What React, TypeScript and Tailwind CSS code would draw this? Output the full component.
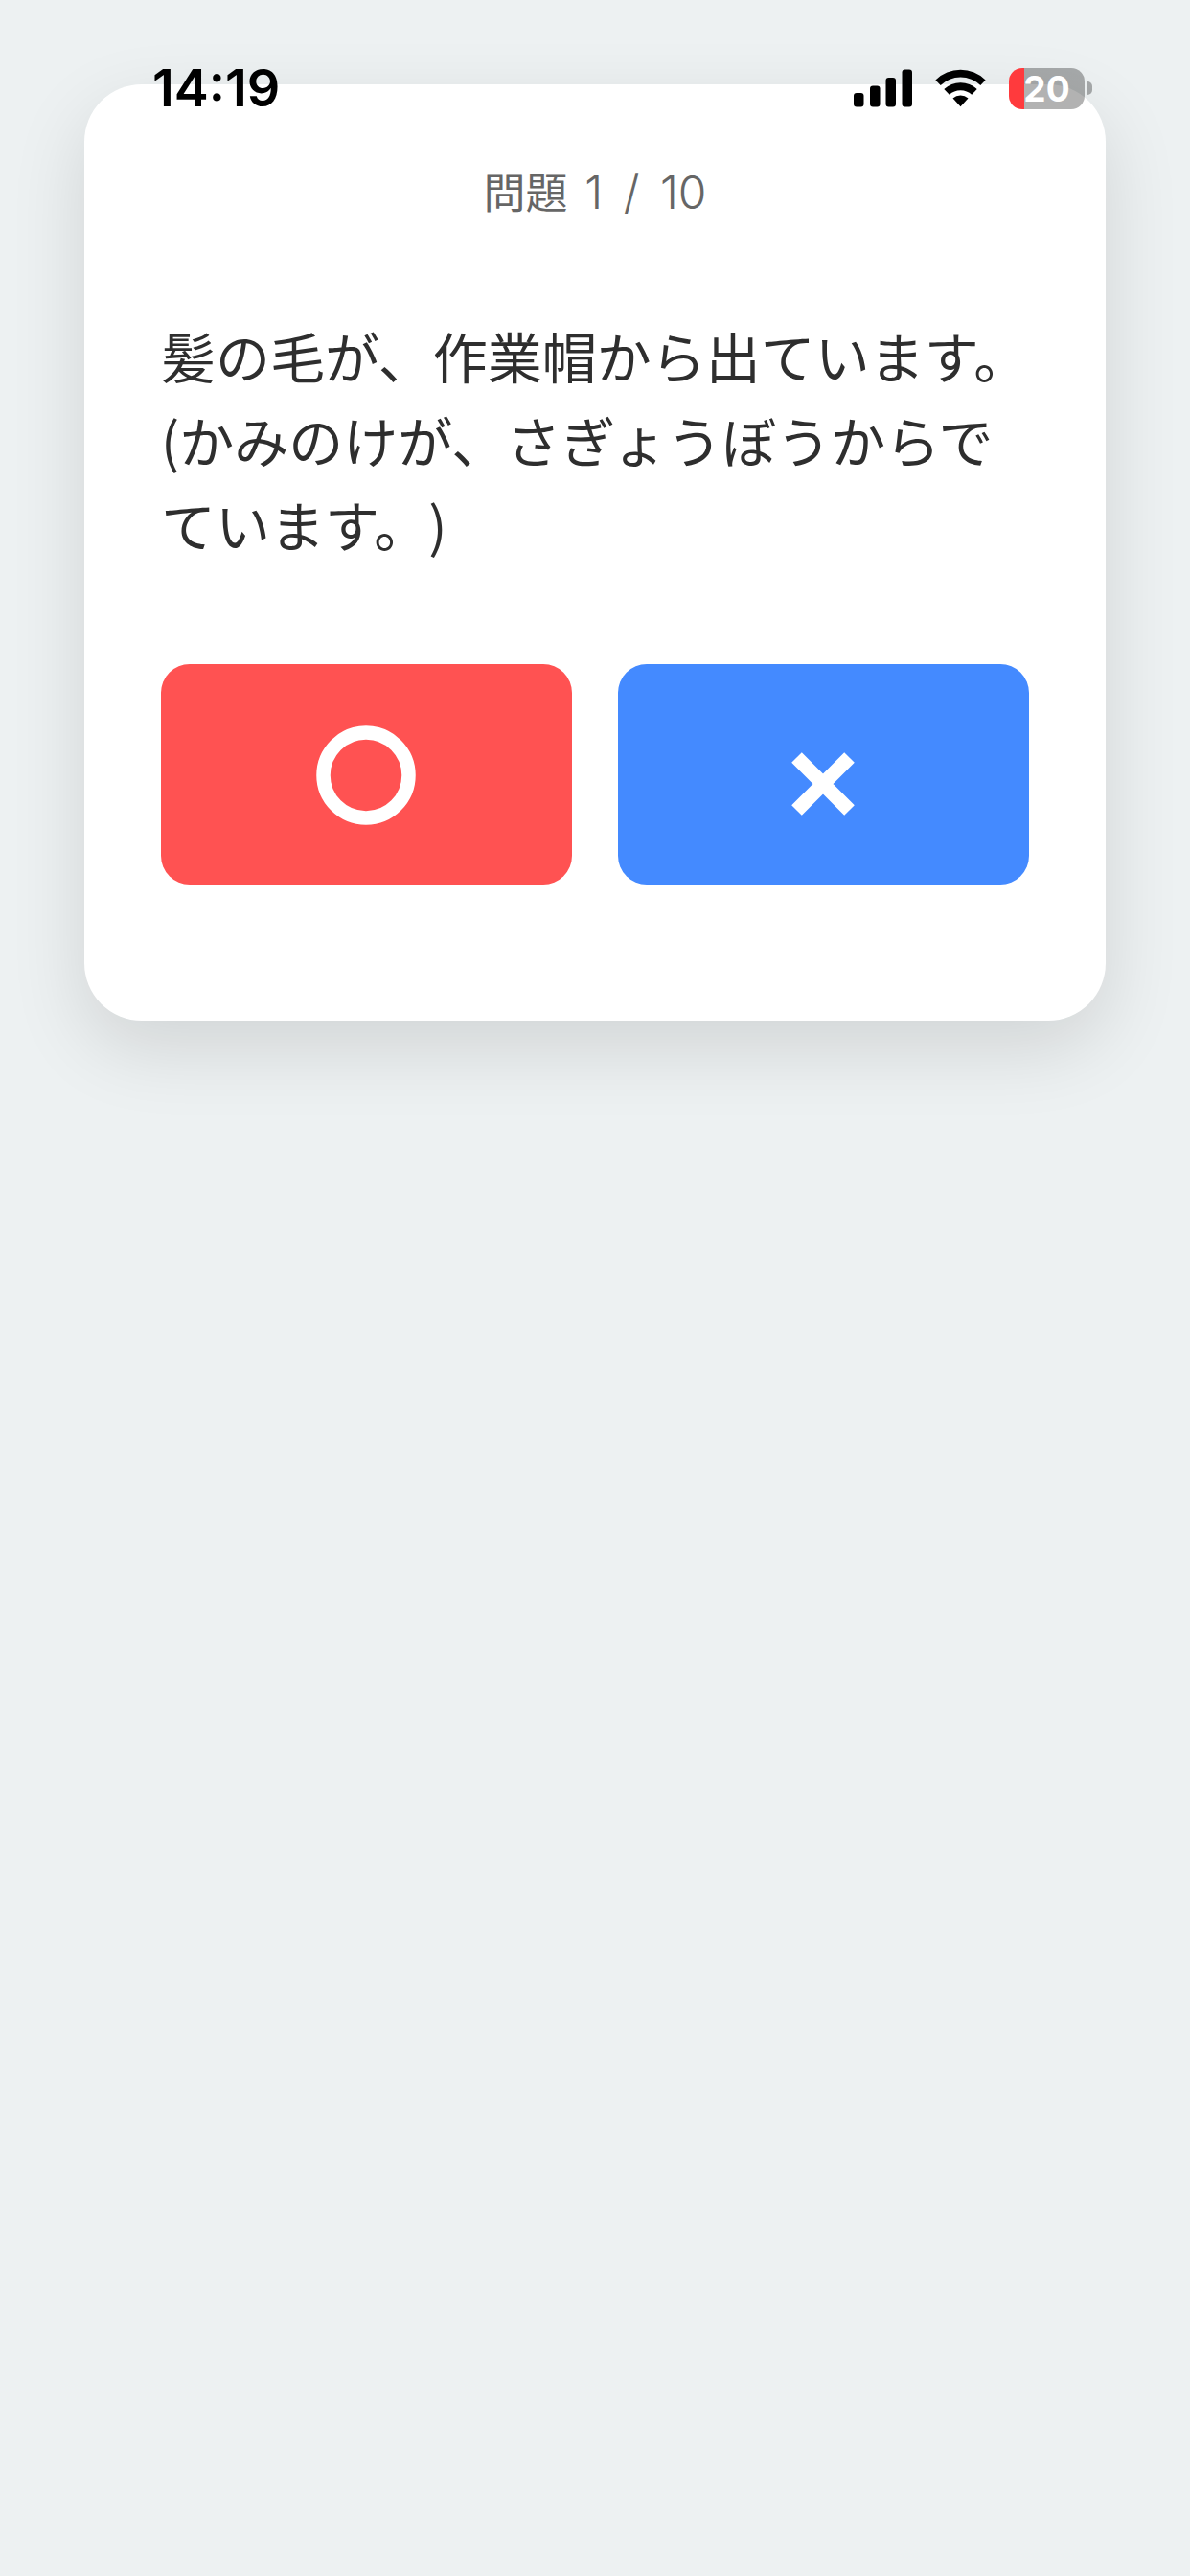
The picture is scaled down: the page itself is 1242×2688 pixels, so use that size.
import { useState } from 'react';

const question = {
  index: 1,
  total: 10,
  text: '髪の毛が、作業帽から出ています。',
  reading: '(かみのけが、さぎょうぼうからでています。)',
};

function StatusBar() {
  return (
    <div className="absolute inset-x-0 top-0 flex h-[184px] items-center justify-between pl-[159px] pr-[102px] text-black">
      <span className="font-['Inter',sans-serif] text-[54px] font-semibold leading-none">14:19</span>
      <div className="flex items-center gap-6">
        {/* Signal */}
        <svg width="61" height="40" viewBox="0 0 61 40" fill="currentColor" aria-hidden="true">
          <rect x="0" y="25" width="10.5" height="14.5" rx="3" />
          <rect x="17" y="17.5" width="10.5" height="22" rx="3" />
          <rect x="33.5" y="9" width="10.5" height="30.5" rx="3" />
          <rect x="50.5" y="0.5" width="10.5" height="39" rx="3" />
        </svg>
        {/* Wi-Fi */}
        <svg width="53" height="40" viewBox="0 0 53 40" fill="currentColor" aria-hidden="true">
          <path d="M0.4 11.4A37.5 37.5 0 0 1 52.6 11.4L47.3 17A29.7 29.7 0 0 0 5.7 17Z" />
          <path d="M9.3 21.1A25 25 0 0 1 43.7 21.1L38.2 26.8A17.2 17.2 0 0 0 14.8 26.8Z" />
          <path d="M18.5 30.6A12 12 0 0 1 34.5 30.6L26.5 39.3Z" />
        </svg>
        {/* Battery */}
        <div className="flex items-center gap-[3px]">
          <div className="flex h-[43px] w-[79px] items-center justify-center overflow-hidden rounded-[14px] bg-[linear-gradient(to_right,#ff3a3d_16px,rgba(0,0,0,0.3)_16px)]">
            <span className="font-['Inter',sans-serif] text-[37px] font-bold leading-none text-white">20</span>
          </div>
          <div className="h-[14px] w-[5px] rounded-r-full bg-black/30" />
        </div>
      </div>
    </div>
  );
}

export default function App() {
  const [answer, setAnswer] = useState<boolean | null>(null);

  return (
    <div className="relative min-h-screen bg-[#edf1f2] px-[88px] pt-[88px] font-['Noto_Sans_CJK_JP',sans-serif]" lang="ja">
      {/* Question card */}
      <main className="rounded-[60px] bg-white px-20 pb-[142px] pt-[78px] shadow-[0_28px_80px_rgba(0,0,0,0.12)]">
        <p className="mb-[92px] text-center text-[44px] leading-[66px] text-[#666]">
          問題{' '}
          <span className="ml-2 font-['Inter','Noto_Sans_CJK_JP',sans-serif] text-[48px] font-light">
            {question.index} <span className="mx-2">/</span> {question.total}
          </span>
        </p>

        <h1 className="mb-[103px] text-[57px] font-normal leading-[88px] text-[#2e2e2e]">
          <span className="block">{question.text}</span>
          <span className="block [text-spacing-trim:space-all]">{question.reading}</span>
        </h1>

        <div className="grid grid-cols-2 gap-12">
          <button
            type="button"
            aria-label="まる"
            aria-pressed={answer === true}
            onClick={() => setAnswer(true)}
            className="flex h-[230px] items-center justify-center rounded-[30px] bg-[#ff5252] text-white"
          >
            <svg width="120" height="120" viewBox="0 0 120 120" fill="none" stroke="currentColor" strokeWidth="14.5">
              <circle cx="59" cy="61" r="44.5" />
            </svg>
          </button>
          <button
            type="button"
            aria-label="ばつ"
            aria-pressed={answer === false}
            onClick={() => setAnswer(false)}
            className="flex h-[230px] items-center justify-center rounded-[30px] bg-[#448aff] text-white"
          >
            <svg width="120" height="120" viewBox="0 0 120 120" fill="none" stroke="currentColor" strokeWidth="15">
              <path d="M31.5 42.5L86.5 97.5M86.5 42.5L31.5 97.5" />
            </svg>
          </button>
        </div>
      </main>

      <StatusBar />
    </div>
  );
}
